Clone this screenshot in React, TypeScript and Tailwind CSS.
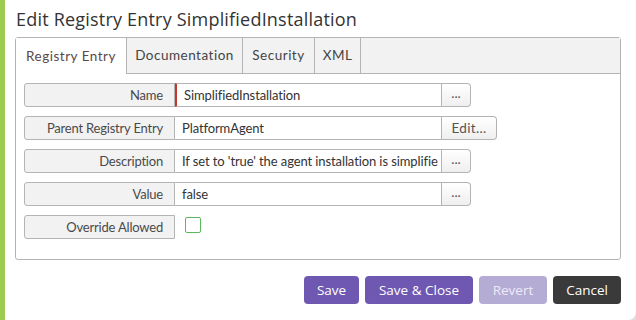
import React from "react";

const FONT = { fontFamily: 'Lato, "Open Sans", sans-serif' };
const TITLE_FONT = { fontFamily: '"Open Sans", "Noto Sans", sans-serif' };

const TABS = ["Registry Entry", "Documentation", "Security", "XML"];
const TAB_WIDTHS = ["w-[111px]", "w-[116px]", "w-[72px]", "w-[46px]"];

function Row({
  label,
  value,
  button,
  required,
}: {
  label: string;
  value: string;
  button: string;
  required?: boolean;
}) {
  return (
    <div className="flex h-[24px] items-stretch">
      <div className="flex w-[151px] items-center justify-end rounded-l-[3px] border border-[#b4b4b4] bg-[#f2f2f2] pr-[11px] pt-px text-[13px] tracking-[-0.2px] text-[#4a4a4a]">
        {label}
      </div>
      <div
        className={`flex w-[267px] items-center overflow-hidden whitespace-nowrap border-y border-r border-[#b4b4b4] bg-white pl-[7px] pt-px text-[13px] tracking-[-0.1px] text-[#333] ${
          required ? "border-l-[2px] border-l-[#c0392b]" : ""
        }`}
      >
        {value}
      </div>
      <button
        className={`flex items-center justify-center rounded-r-[4px] border-y border-r border-[#b4b4b4] bg-gradient-to-b from-white to-[#efefef] text-[13.5px] text-[#555] ${
          button === "..." ? "w-[29px] pb-[3px]" : "w-[55px] tracking-wide"
        }`}
      >
        {button}
      </button>
    </div>
  );
}

export default function App() {
  return (
    <div className="h-[320px] w-[636px] bg-[#dedede]" style={FONT}>
      <div className="flex h-full flex-col rounded-br-[8px] border-l-[5px] border-[#9ccb4f] bg-white pl-[10px] pr-[15px]">
        <h1
          className="pt-[6px] pl-[1px] text-[18px] leading-[26px] tracking-[0.2px] text-[#333]"
          style={TITLE_FONT}
        >
          Edit Registry Entry SimplifiedInstallation
        </h1>

        <div className="mt-[5px] flex h-[223px] flex-col rounded-[3px] border border-[#b4b4b4]">
          <div className="flex h-[36px] border-b border-[#b4b4b4] bg-[#f2f2f2]">
            {TABS.map((tab, i) => (
              <div
                key={tab}
                className={`flex items-center justify-center border-r border-[#b4b4b4] text-[13.5px] tracking-[0.5px] ${
                  TAB_WIDTHS[i]
                } ${i === 0 ? "relative -mb-px bg-white text-[#5b4848]" : "text-[#444]"}`}
              >
                {tab}
              </div>
            ))}
          </div>

          <div className="flex flex-col gap-[9px] pl-[8px] pt-[9px]">
            <Row label="Name" value="SimplifiedInstallation" button="..." required />
            <Row label="Parent Registry Entry" value="PlatformAgent" button="Edit..." />
            <Row
              label="Description"
              value="If set to 'true' the agent installation is simplifie"
              button="..."
            />
            <Row label="Value" value="false" button="..." />
            <div className="flex h-[24px] items-start">
              <div className="flex h-full w-[151px] items-center justify-end rounded-l-[3px] border border-[#b4b4b4] bg-[#f2f2f2] pr-[11px] pt-px text-[13px] tracking-[-0.2px] text-[#4a4a4a]">
                Override Allowed
              </div>
              <div className="ml-[10px] mt-[2px] h-[16px] w-[16px] rounded-[2px] border border-[#5cb85c] bg-white" />
            </div>
          </div>
        </div>

        <div
          className="mt-[16px] flex justify-end gap-[6px] text-[13.5px] font-medium"
          style={TITLE_FONT}
        >
          <button className="h-[28px] w-[55px] rounded-[4px] bg-[#6e58b1] text-white">Save</button>
          <button className="h-[28px] w-[108px] rounded-[4px] bg-[#6e58b1] text-white">Save &amp; Close</button>
          <button className="h-[28px] w-[68px] rounded-[4px] bg-[#b5acd6] text-[#eeeaf7]">Revert</button>
          <button className="h-[28px] w-[68px] rounded-[4px] bg-[#3a3a3a] text-white">Cancel</button>
        </div>
      </div>
    </div>
  );
}
